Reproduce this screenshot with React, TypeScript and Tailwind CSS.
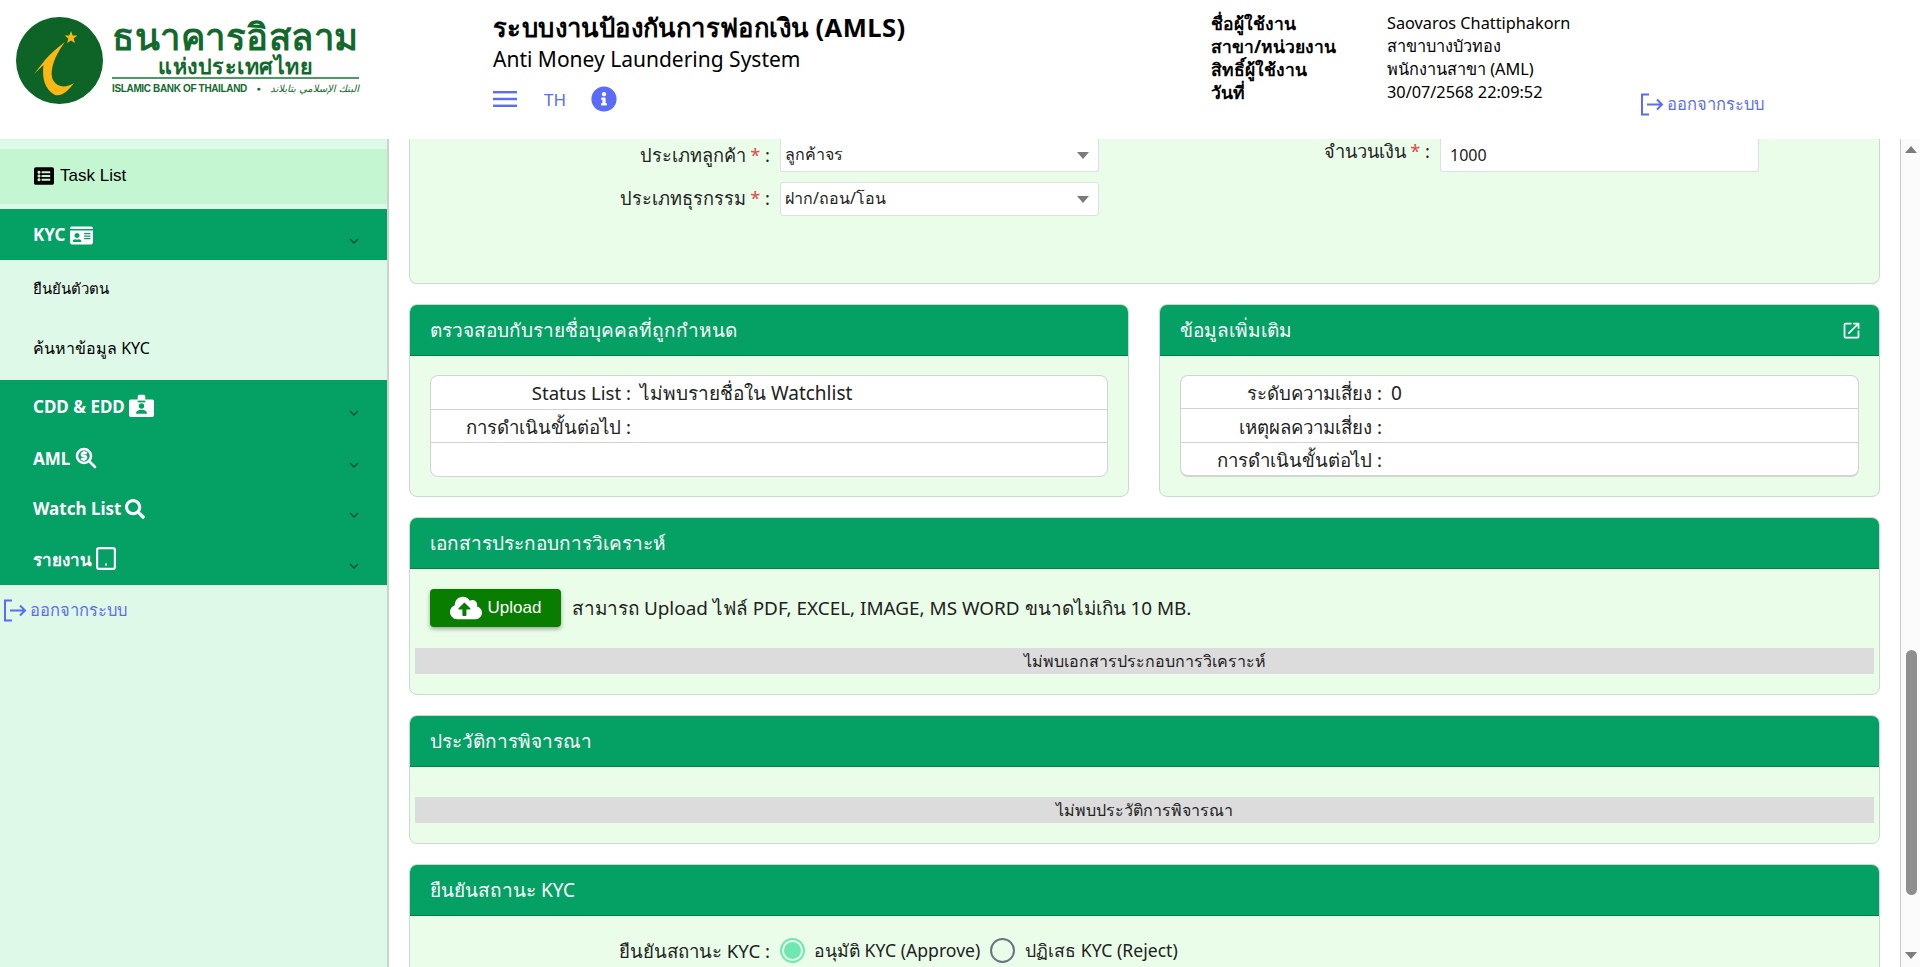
import type { ReactNode } from "react";
import { FaListAlt, FaIdCard, FaSearch, FaCloudUploadAlt, FaInfoCircle } from "react-icons/fa";
import { MdOpenInNew, MdKeyboardArrowDown } from "react-icons/md";
import { TbZoomMoney } from "react-icons/tb";

const USER_INFO = [
  { label: "ชื่อผู้ใช้งาน", value: "Saovaros Chattiphakorn" },
  { label: "สาขา/หน่วยงาน", value: "สาขาบางบัวทอง" },
  { label: "สิทธิ์ผู้ใช้งาน", value: "พนักงานสาขา (AML)" },
  { label: "วันที่", value: "30/07/2568 22:09:52" },
];

const LogoutIcon = () => (
  <svg width="24" height="23" viewBox="0 0 24 23" fill="none" stroke="#5a6cf8" strokeWidth="2">
    <path d="M9 1.5H2v20h7" />
    <path d="M7 11.5h15M17 6.5l5 5-5 5" />
  </svg>
);

const LogoutLink = () => (
  <a className="flex items-center gap-[3px] text-[16.5px] leading-none text-[#5a6cf8]">
    <LogoutIcon />
    ออกจากระบบ
  </a>
);

const BadgeIcon = () => (
  <svg width="25" height="23" viewBox="0 0 23 21" className="mt-[-3px]">
    <path d="M1.5 5H8V2a1.5 1.5 0 0 1 1.5-1.5h4A1.5 1.5 0 0 1 15 2v3h6.5A1.5 1.5 0 0 1 23 6.5v13a1.5 1.5 0 0 1-1.5 1.5h-20A1.5 1.5 0 0 1 0 19.5v-13A1.5 1.5 0 0 1 1.5 5z" fill="#fff" />
    <rect x="8" y="6" width="7" height="1.6" fill="#04a064" />
    <circle cx="11.5" cy="11" r="2.5" fill="#04a064" />
    <path d="M6.5 18c0-2.5 2.2-3.5 5-3.5s5 1 5 3.5z" fill="#04a064" />
  </svg>
);

const TabletIcon = () => (
  <svg width="20" height="23" viewBox="0 0 20 23" className="mt-[-3px]">
    <rect x="1.1" y="1.1" width="17.8" height="20.8" rx="2" fill="none" stroke="#fff" strokeWidth="2.2" />
    <rect x="9" y="16.5" width="2" height="2" fill="#fff" />
  </svg>
);

const Logo = () => (
  <div className="flex items-start pl-4 pt-[17px]">
    <svg width="87" height="87" viewBox="0 0 87 87" className="shrink-0">
      <circle cx="43.5" cy="43.5" r="43.5" fill="#0e6427" />
      <path d="M49 25C41 31 34 37 29 43L18 57 27.5 48C26 60 28 72 39 78 46 80 53 73 58 66 50 71 42 71 37 63 33 54 39 38 49 25Z" fill="#fdb714" />
      <path d="M55 14l1.7 4.4 4.6.2-3.6 2.9 1.2 4.5-3.9-2.6-3.9 2.6 1.2-4.5-3.6-2.9 4.6-.2z" fill="#fdb714" />
    </svg>
    <div className="ml-[9px] flex w-[247px] flex-col items-center text-[#11692c]">
      <div className="h-[38px] whitespace-nowrap text-[36.5px] font-bold leading-[38px] tracking-[0.5px]">
        ธนาคารอิสลาม
      </div>
      <div className="h-[21px] whitespace-nowrap text-[21.5px] font-bold leading-[21px] tracking-[0.5px]">
        แห่งประเทศไทย
      </div>
      <div className="mt-[1px] h-[2px] w-full bg-[#4c9a62]" />
      <div className="mt-[3px] flex w-full items-center justify-between whitespace-nowrap font-['Liberation_Sans',sans-serif] text-[10px] font-bold leading-[14px]">
        <span className="tracking-[-0.35px]">ISLAMIC BANK OF THAILAND</span>
        <span className="text-[7px]">●</span>
        <span className="font-['DejaVu_Sans',sans-serif] text-[10px] font-normal italic">البنك الإسلامي بتايلاند</span>
      </div>
    </div>
  </div>
);

const Header = () => (
  <header className="relative flex h-[139px] shrink-0 bg-white text-black">
    <div className="w-[493px] shrink-0">
      <Logo />
    </div>
    <div className="w-[718px] shrink-0 pt-[10px]">
      <div className="text-[25.6px] font-bold leading-[36px] tracking-[0.4px]">ระบบงานป้องกันการฟอกเงิน (AMLS)</div>
      <div className="text-[21px] leading-[26px]">Anti Money Laundering System</div>
      <div className="mt-[14px] flex items-center text-[#5a6cf8]">
        <svg width="24" height="16" viewBox="0 0 24 16" fill="#5a6cf8">
          <rect width="24" height="2.4" y="0" />
          <rect width="24" height="2.4" y="6.8" />
          <rect width="24" height="2.4" y="13.6" />
        </svg>
        <span className="ml-[27px] text-[17px] leading-none">TH</span>
        <FaInfoCircle className="ml-[25px]" size={26} />
      </div>
    </div>
    <div className="grid h-fit grid-cols-[176px_auto] pt-[12px] leading-[23px]">
      {USER_INFO.map((row) => (
        <div key={row.label} className="contents">
          <span className="text-[17.5px] font-bold">{row.label}</span>
          <span className="text-[16.3px]">{row.value}</span>
        </div>
      ))}
    </div>
    <div className="absolute left-[1640px] top-[93px]">
      <LogoutLink />
    </div>
  </header>
);

const MenuRow = ({ label, icon, height }: { label: string; icon: ReactNode; height: string }) => (
  <div className={`flex items-start bg-[#04a064] pl-[33px] pr-[24px] text-white ${height}`}>
    <span className="flex items-center gap-[4px] text-[17px] font-bold leading-[24px]">
      {label}
      {icon}
    </span>
    <MdKeyboardArrowDown className="ml-auto mt-[9px] self-start text-[#14532d]" size={18} />
  </div>
);

const Sidebar = () => (
  <aside className="flex w-[389px] shrink-0 flex-col border-r-2 border-[#c9d4cd] bg-[#dff9e8] text-black">
    <div className="mt-[10px] flex h-[55px] items-center gap-[6px] bg-[#c5f6d2] pb-[2px] pl-[34px] font-['Liberation_Sans',sans-serif] text-[17px]">
      <FaListAlt size={20} />
      Task List
    </div>
    <div className="mt-[5px]">
      <MenuRow label="KYC" height="h-[51px] pt-[14px]" icon={<FaIdCard size={23} />} />
    </div>
    <div className="flex h-[120px] flex-col">
      <div className="flex h-[58px] items-center pb-[2px] pl-[33px] text-[15px]">ยืนยันตัวตน</div>
      <div className="flex h-[62px] items-center pb-[2px] pl-[33px] text-[16px]">ค้นหาข้อมูล KYC</div>
    </div>
    <MenuRow label="CDD & EDD" height="h-[51px] pt-[15px]" icon={<BadgeIcon />} />
    <MenuRow label="AML" height="h-[52px] pt-[16px]" icon={<TbZoomMoney size={24} strokeWidth={2.6} className="mt-[-3px]" />} />
    <MenuRow label="Watch List" height="h-[51px] pt-[14px]" icon={<FaSearch size={20} />} />
    <MenuRow label="รายงาน" height="h-[51px] pt-[14px]" icon={<TabletIcon />} />
    <div className="pl-[3px] pt-[14px]">
      <LogoutLink />
    </div>
  </aside>
);

const Card = ({ title, action, children }: { title: string; action?: ReactNode; children: ReactNode }) => (
  <section className="flex flex-col rounded-[8px] border border-[#c8dccd] bg-[#e9fde9]">
    <div className="flex h-[51px] shrink-0 items-center justify-between rounded-t-[7px] border-b border-[#03804f] bg-[#04a064] px-5 text-[19px] text-white">
      {title}
      {action}
    </div>
    {children}
  </section>
);

const InfoTable = ({ rows, labelWidth, closed }: { rows: { label: string; value?: string }[]; labelWidth: string; closed?: boolean }) => (
  <div className={`mx-5 mb-[19px] mt-[19px] flex h-[102px] flex-col overflow-hidden rounded-[8px] border border-[#d0d5d2] bg-white text-[18.6px] ${closed ? "border-b-[2px]" : ""}`}>
    {rows.map((row, i) => (
      <div key={i} className="flex flex-1 items-center border-b border-[#d0d5d2] pt-[2px] last:border-b-0">
        <span className={`text-right ${labelWidth}`}>{row.label}</span>
        {row.value && <span className="ml-[9px] text-[19px]">{row.value}</span>}
      </div>
    ))}
  </div>
);

const SelectBox = ({ value, className }: { value: string; className: string }) => (
  <div className={`flex w-[319px] items-center justify-between rounded-[3px] border border-[#dcdfe6] bg-white pl-[4px] pr-[9px] text-[16px] ${className}`}>
    <span className="pb-[2px]">{value}</span>
    <svg width="12" height="7" viewBox="0 0 12 7" fill="#7a7a7a">
      <path d="M0 0h12L6 7z" />
    </svg>
  </div>
);

const Required = ({ label }: { label: string }) => (
  <span className="w-[360px] pb-[2px] text-right text-[18.2px] leading-[24px]">
    {label} <span className="text-[#e5484d]">*</span> :
  </span>
);

const Radio = ({ checked }: { checked?: boolean }) =>
  checked ? (
    <span className="flex h-[25px] w-[25px] items-center justify-center rounded-full border-2 border-[#6ee7b0]">
      <span className="h-[17px] w-[17px] rounded-full bg-[#6ee7b0]" />
    </span>
  ) : (
    <span className="h-[25px] w-[25px] rounded-full border-2 border-[#6b7280]" />
  );

const Scrollbar = () => (
  <div className="flex w-[20px] shrink-0 flex-col items-center border-l border-[#c9c9c9] bg-[#fbfbfb] pl-[1px] pt-[7px]">
    <svg width="12" height="7" viewBox="0 0 12 7" fill="#7d7d7d">
      <path d="M6 0l6 7H0z" />
    </svg>
    <div className="mt-[497px] h-[245px] w-[11px] rounded-full bg-[#8f8f8f]" />
    <svg className="mt-[57px]" width="12" height="7" viewBox="0 0 12 7" fill="#7d7d7d">
      <path d="M0 0h12L6 7z" />
    </svg>
  </div>
);

export default function App() {
  return (
    <div className="flex h-[967px] flex-col overflow-hidden bg-white font-['Noto_Sans',sans-serif] text-[#212121]">
      <Header />
      <div className="flex min-h-0 flex-1">
        <Sidebar />
        <main className="flex min-w-0 flex-1 flex-col gap-5 overflow-hidden pl-5 pr-5">
          <section className="flex h-[145px] shrink-0 rounded-b-[8px] border-x border-b border-[#c8dccd] bg-[#e9fde9]">
            <div className="flex flex-col gap-[10px]">
              <div className="flex items-center gap-[10px]">
                <Required label="ประเภทลูกค้า" />
                <SelectBox value="ลูกค้าจร" className="h-[33px] rounded-t-none border-t-0" />
              </div>
              <div className="flex items-center gap-[10px]">
                <Required label="ประเภทธุรกรรม" />
                <SelectBox value="ฝาก/ถอน/โอน" className="h-[34px]" />
              </div>
            </div>
            <div className="flex h-fit items-start">
              <span className="ml-[-29px] w-[360px] text-right text-[18.2px] leading-[25px]">
                จำนวนเงิน <span className="text-[#e5484d]">*</span> :
              </span>
              <div className="ml-[10px] flex h-[33px] w-[319px] items-center rounded-b-[3px] border-x border-b border-[#dcdfe6] bg-white pl-[9px] text-[16px]">
                1000
              </div>
            </div>
          </section>

          <div className="flex shrink-0 gap-[30px]">
            <div className="w-[720px] shrink-0">
              <Card title="ตรวจสอบกับรายชื่อบุคคลที่ถูกกำหนด">
                <InfoTable
                  labelWidth="w-[200px]"
                  rows={[{ label: "Status List :", value: "ไม่พบรายชื่อใน Watchlist" }, { label: "การดำเนินขั้นต่อไป :" }, { label: "" }]}
                />
              </Card>
            </div>
            <div className="min-w-0 flex-1">
              <Card title="ข้อมูลเพิ่มเติม" action={<MdOpenInNew size={21} className="mr-[-3px]" />}>
                <InfoTable
                  closed
                  labelWidth="w-[201px]"
                  rows={[{ label: "ระดับความเสี่ยง :", value: "0" }, { label: "เหตุผลความเสี่ยง :" }, { label: "การดำเนินขั้นต่อไป :" }]}
                />
              </Card>
            </div>
          </div>

          <Card title="เอกสารประกอบการวิเคราะห์">
            <div className="flex flex-col pb-5 pt-5">
              <div className="flex items-center gap-[11px] pl-5">
                <button className="flex h-[38px] w-[131px] items-center justify-center gap-[6px] rounded-[4px] bg-[#087d00] font-['Liberation_Sans',sans-serif] text-[17px] text-white shadow-[0_2px_4px_rgba(0,0,0,0.35)]">
                  <FaCloudUploadAlt size={32} />
                  Upload
                </button>
                <span className="text-[18.9px]">สามารถ Upload ไฟล์ PDF, EXCEL, IMAGE, MS WORD ขนาดไม่เกิน 10 MB.</span>
              </div>
              <div className="mx-[5px] mt-[21px] flex h-[26px] items-center justify-center bg-[#dcdcdc] text-[16px]">
                ไม่พบเอกสารประกอบการวิเคราะห์
              </div>
            </div>
          </Card>

          <Card title="ประวัติการพิจารณา">
            <div className="pb-5 pt-[30px]">
              <div className="mx-[5px] flex h-[26px] items-center justify-center bg-[#dcdcdc] text-[16px]">
                ไม่พบประวัติการพิจารณา
              </div>
            </div>
          </Card>

          <Card title="ยืนยันสถานะ KYC">
            <div className="flex h-[90px] items-start gap-[10px] pt-[22px] text-[18.6px]">
              <span className="w-[360px] text-right leading-[25px]">ยืนยันสถานะ KYC :</span>
              <Radio checked />
              <span className="ml-[-1px] text-[17.6px] leading-[25px]">อนุมัติ KYC (Approve)</span>
              <Radio />
              <span className="text-[17.6px] leading-[25px]">ปฏิเสธ KYC (Reject)</span>
            </div>
          </Card>
        </main>
        <Scrollbar />
      </div>
    </div>
  );
}
